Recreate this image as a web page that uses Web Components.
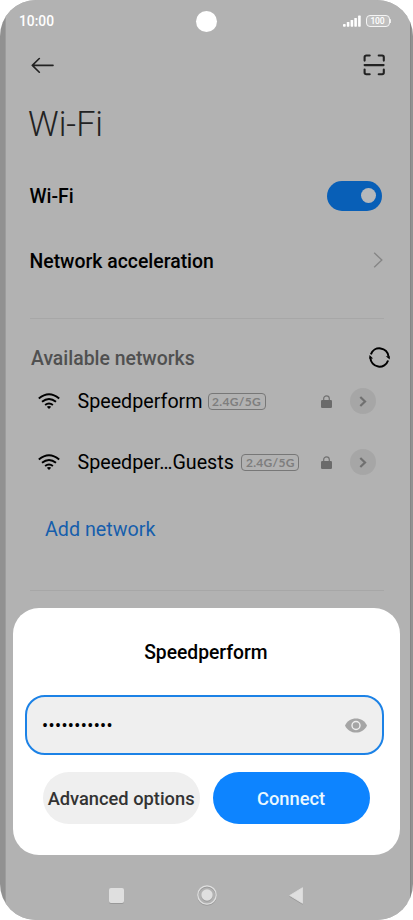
<!DOCTYPE html>
<html lang="en">
<head>
<meta charset="utf-8">
<title>Wi-Fi</title>
<style>
  html, body { margin: 0; background: #fff; }
  body { width: 413px; height: 920px; overflow: hidden; font-family: Roboto, "Noto Sans", sans-serif; }
</style>
</head>
<body>
<phone-frame>
  <status-bar></status-bar>
  <app-bar></app-bar>
  <page-title>Wi-Fi</page-title>
  <setting-row style="--h:64px">Wi-Fi<toggle-switch slot="end"></toggle-switch></setting-row>
  <setting-row style="--h:66px">Network acceleration<chevron-icon slot="end"></chevron-icon></setting-row>
  <line-divider style="--t:24px"></line-divider>
  <section-head>Available networks</section-head>
  <network-row>Speedperform</network-row>
  <network-row style="--gap:7.5px">Speedper…Guests</network-row>
  <add-link>Add network</add-link>
  <line-divider style="--t:14px"></line-divider>
  <nav-bar slot="nav"></nav-bar>
  <wifi-dialog slot="dialog">
    <span slot="title">Speedperform</span>
    <password-field slot="field">•••••••••••</password-field>
    <pill-button slot="actions">Advanced options</pill-button>
    <pill-button slot="actions" primary>Connect</pill-button>
  </wifi-dialog>
</phone-frame>

<script>
const define = (name, html) => customElements.define(name, class extends HTMLElement {
  constructor() {
    super();
    this.attachShadow({ mode: 'open' }).innerHTML = html;
  }
});

define('phone-frame', `
<style>
  :host { display: flex; flex-direction: column; box-sizing: border-box; position: relative; width: 413px; height: 920px;
    border-radius: 36px; overflow: hidden; color: #000;
    background: linear-gradient(90deg, #919191 0 5px, #9d9d9d 5px 6px, #b2b2b2 6px 410px, #868686 410px 411px, #929292 411px); }
  main { flex: 1; display: flex; flex-direction: column; }
  .dialog { position: absolute; left: 13px; top: 607.5px; width: 386.5px; height: 247px; }
  .cap { position: absolute; left: 0; width: 413px; height: 17px; background: #b2b2b2; }
</style>
<div class="cap" style="top:0"></div><div class="cap" style="bottom:0"></div>
<main><slot></slot></main>
<slot name="nav"></slot>
<div class="dialog"><slot name="dialog"></slot></div>`);

define('status-bar', `
<style>
  :host { display: grid; grid-template-columns: 1fr 21px 1fr; align-items: center; height: 41px; padding: 0 22px 0 19px; color: #fff;
    position: relative; }
  .time { font-size: 13.8px; letter-spacing: 0; font-weight: 500; line-height: 41px; padding-top: 1px; }
  .cam { width: 21px; height: 21px; border-radius: 50%; background: #fff; margin-left: 1.3px; }
  .right { display: flex; justify-content: flex-end; align-items: center; gap: 5px; }
  .bat { box-sizing: border-box; width: 24px; height: 12px; border: 1.3px solid #f4f4f4; border-radius: 4px; display: grid; place-items: center;
    font-size: 8.5px; line-height: 9px; font-weight: 500; background: #bfbfbf; letter-spacing: -.1px; }
  .tip { width: 1px; height: 4px; background: #eee; margin-left: -4.5px; border-radius: 1px; }
  svg { display: block; }
</style>
<span class="time">10:00</span><span class="cam"></span>
<span class="right">
  <svg width="18" height="12" viewBox="0 0 18 12" fill="#fff"><rect x="0" y="9" width="2.7" height="2.7" rx=".7"/><rect x="3.8" y="7" width="2.6" height="4.7" rx=".6"/><rect x="7.6" y="5" width="2.6" height="6.7" rx=".6"/><rect x="11.3" y="2.9" width="2.6" height="8.8" rx=".6"/><rect x="15.1" y=".6" width="2.6" height="11.1" rx=".6"/></svg>
  <span class="bat">100</span><span class="tip"></span>
</span>`);

define('app-bar', `
<style>
  :host { display: flex; justify-content: space-between; align-items: center; height: 48px; padding: 0 28px 0 31px; }
  svg { display: block; }
</style>
<svg width="23" height="16" viewBox="0 0 23 16" fill="none" stroke="#222" stroke-width="1.6" stroke-linecap="round" stroke-linejoin="round"><path d="M22 8.4H1.6M8.3 1.5 1.3 8.4 8.3 15.2"/></svg>
<svg width="22" height="22" viewBox="0 0 22 22" fill="none" stroke="#222" stroke-width="2.1" stroke-linecap="round" stroke-linejoin="round"><path d="M1.6 6.6V3.2Q1.6 1.5 3.3 1.5H6.7M15.7 1.5H19.1Q20.8 1.5 20.8 3.2V6.6M20.8 15.6V18.6Q20.8 20.300 19.100 20.300H15.700M6.700 20.300H3.300Q1.600 20.300 1.600 18.600V15.600M1.600 11.100H20.600"/></svg>`);

define('page-title', `
<style>
  :host { display: block; height: 75px; padding-left: 28px; font-size: 34.2px; font-weight: 300; line-height: 71px; color: #222; }
</style><slot></slot>`);

define('setting-row', `
<style>
  :host { display: flex; justify-content: space-between; align-items: center; height: var(--h); padding: 0 30px 0 29.5px; font-size: 19.4px; font-weight: 500; }
</style><span><slot></slot></span><slot name="end"></slot>`);

define('toggle-switch', `
<style>
  :host { display: flex; justify-content: flex-end; align-items: center; box-sizing: border-box; width: 55px; height: 30.5px; margin: 0 .7px .5px 0; padding-right: 6px; border-radius: 16px; background: #085fb7; }
  i { width: 15px; height: 15px; border-radius: 50%; background: #b5b8bb; }
</style><i></i>`);

define('chevron-icon', `
<style>:host { display: block; margin-bottom: 1.5px; } svg { display: block; }</style>
<svg width="10" height="16" viewBox="0 0 10 16" fill="none" stroke="#868686" stroke-width="1.4"><path d="M1.2 .8 8.8 8 1.2 15.2"/></svg>`);

define('line-divider', `
<style>:host { display: block; margin: var(--t) 29px 0 30px; height: 1px; flex: none; background: #a7a7a7; }</style>`);

define('section-head', `
<style>
  :host { display: flex; justify-content: space-between; align-items: center; height: 26px; padding: 26px 23.5px 0 31px; font-size: 19.4px; font-weight: 500; color: #505050; }
  svg { display: block; margin-bottom: 2px; }
</style><span><slot></slot></span>
<svg width="21" height="21" viewBox="0 0 21 21" fill="none" stroke="#000" stroke-width="2"><path d="M1.9 7.3A9.1 9.1 0 0 1 19.5 9.5M19.1 13.5A9.1 9.1 0 0 1 1.4 11"/><path fill="#000" stroke="none" d="M16.8 9.3H20.9L20.7 12.5ZM4.1 11.5H.1L.5 8Z"/></svg>`);

define('network-row', `
<style>
  :host { display: grid; grid-template-columns: 39.5px auto 1fr 11px 44px; align-items: center; height: 61px; padding: 0 37px 0 38px; font-size: 19.7px; }
  svg { display: block; }
  .badge { justify-self: start; box-sizing: border-box; margin: 0 0 1px var(--gap, 5px); width: 58px; height: 17px; border: 1.3px solid #777; border-radius: 4px;
    font: 700 12px/15px Lato, sans-serif; letter-spacing: .3px; text-align: center; color: #7e7e7e; }
  .lock { margin-bottom: 1px; }
  .wifi { margin-bottom: 1px; }
  .go { margin: 0 0 1px 18px; width: 26px; height: 26px; border-radius: 50%; background: #a6a6a6; display: grid; place-items: center; }
</style>
<svg class="wifi" width="22" height="16" viewBox="0 0 22 16" fill="none" stroke="#000" stroke-width="1.9"><path d="M.8 5.4Q11-3.1 21.2 5.4M4 8.8Q11 3 18 8.8M7.1 12Q11 9 14.9 12"/><path fill="#000" stroke="none" d="M8.8 13.7Q11 12.1 13.2 13.7L11 16Z"/></svg>
<span><slot></slot></span><span class="badge">2.4G/5G</span>
<svg class="lock" width="11" height="13" viewBox="0 0 11 13"><path d="M2.7 6V3.6a2.8 2.8 0 0 1 5.6 0V6" fill="none" stroke="#707070" stroke-width="1.2"/><rect y="5" width="11" height="8" rx="1.2" fill="#6b6b6b"/></svg>
<span class="go"><svg width="8" height="11" viewBox="0 0 8 11" fill="none" stroke="#707070" stroke-width="2.2"><path d="M1.3 1 6 5.5 1.3 10"/></svg></span>`);

define('add-link', `
<style>:host { display: block; padding-left: 45px; margin-top: 17px; font-size: 19.7px; line-height: 40px; color: #165eac; height: 66px; }</style><slot></slot>`);

define('nav-bar', `
<style>
  :host { display: grid; grid-template-columns: 16px 20px 14px; column-gap: 72px; align-items: center; height: 50px; padding-left: 108.6px; }
  svg { display: block; filter: drop-shadow(0 1px .5px #999); }
</style>
<svg width="15" height="15"><rect width="15" height="15" rx="2" fill="#dfdfdf"/></svg>
<svg width="20" height="20" viewBox="0 0 20 20"><circle cx="10" cy="10" r="9.2" fill="none" stroke="#dfdfdf" stroke-width="1.3"/><circle cx="10" cy="10" r="5.7" fill="#dfdfdf"/></svg>
<svg width="14" height="17" viewBox="0 0 14 17"><path d="M13.5 .7V16.3L.7 8.5Z" fill="#dfdfdf" stroke="#dfdfdf" stroke-width=".8" stroke-linejoin="round"/></svg>`);

define('wifi-dialog', `
<style>
  :host { display: flex; flex-direction: column; box-sizing: border-box; height: 247px; padding: 0 16px 0 12.3px; border-radius: 26px; background: #fff; }
  h2 { margin: 0 0 0 3px; height: 88px; line-height: 89px; text-align: center; font-size: 19.3px; font-weight: 500; }
  .actions { display: flex; gap: 13px; padding: 17px 0 0 17.3px; }
</style>
<h2><slot name="title"></slot></h2>
<slot name="field"></slot>
<div class="actions"><slot name="actions"></slot></div>`);

define('password-field', `
<style>
  :host { display: flex; justify-content: space-between; align-items: center; box-sizing: border-box; height: 60px; margin-top: -.3px; padding: 0 15px 0 14.8px;
    border: 2px solid #1c82e6; border-radius: 20px; background: #efefef; }
  span { font-size: 18px; letter-spacing: .37px; padding-top: 1px; }
  svg { display: block; }
</style><span><slot></slot></span>
<svg width="22" height="15" viewBox="0 0 22 15"><path d="M0 7.5C2.1 2.8 6.3 .4 11 .4s8.9 2.4 11 7.1c-2.1 4.7-6.3 7.1-11 7.1S2.100 12.200 0 7.500Z" fill="#a5a5a5"/><circle cx="11" cy="7.500" r="4" fill="#a5a5a5" stroke="#efefef" stroke-width="1.400"/></svg>`);

define('pill-button', `
<style>
  :host { display: grid; place-items: center; width: 157px; height: 52px; flex: none; border-radius: 26px; background: #efefef; color: #333; font-size: 18.3px; font-weight: 500; white-space: nowrap; }
  :host([primary]) { background: #0d84ff; color: #eaf8ff; }
  span { padding-top: 1px; }
</style><span><slot></slot></span>`);
</script>
</body>
</html>
